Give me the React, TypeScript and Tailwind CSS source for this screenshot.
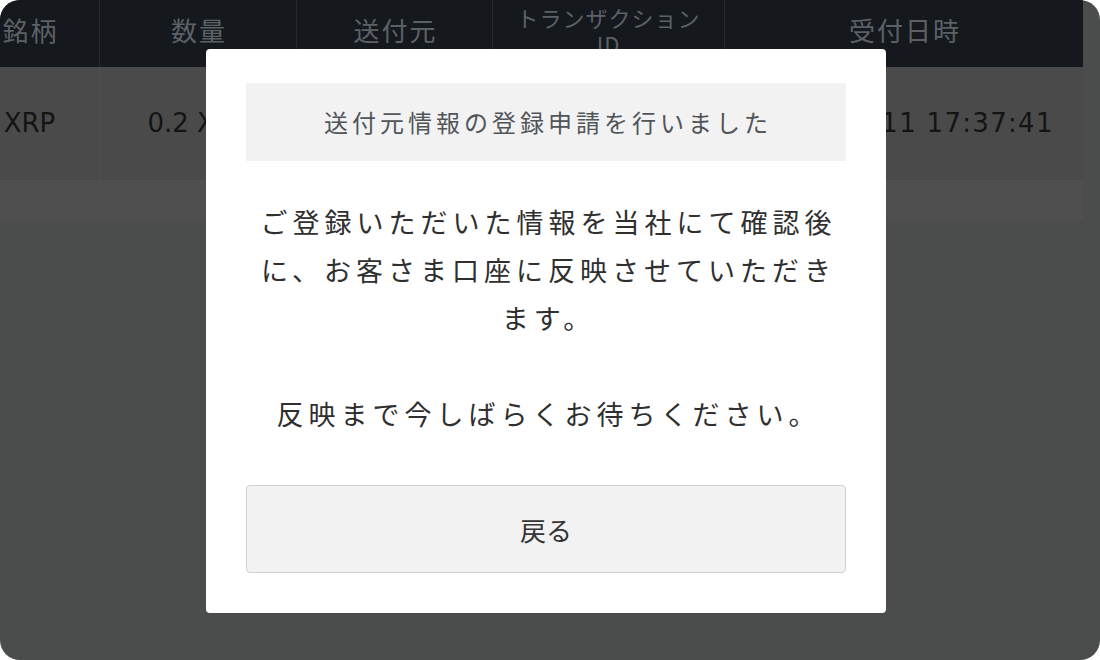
const jp = "font-['Noto_Sans_CJK_JP',sans-serif]";
const latin = "font-['DejaVu_Sans','Noto_Sans_CJK_JP',sans-serif]";

function HeaderCell({ className, children }: { className: string; children: React.ReactNode }) {
  return (
    <div
      className={`flex h-full items-center justify-center border-r border-[#25282d] pb-[8px] text-[#5c6168] ${className}`}
    >
      {children}
    </div>
  );
}

function RowCell({ className, children }: { className: string; children?: React.ReactNode }) {
  return (
    <div className={`flex h-full items-center justify-center border-r border-[#505050] ${className}`}>
      {children}
    </div>
  );
}

export default function App() {
  return (
    <div className="h-[660px] w-[1100px] bg-white">
      <div className="relative h-full w-full overflow-hidden rounded-[20px] bg-[#4b4d4c]">
        {/* table behind the dialog */}
        <div className="ml-[-40px] w-[1123px]">
          <div className={`flex h-[67px] bg-[#15181c] ${jp} text-[26px] tracking-[2px]`}>
            <HeaderCell className="w-[140px] pl-[2px]">銘柄</HeaderCell>
            <HeaderCell className="w-[197px] pl-[2px]">数量</HeaderCell>
            <HeaderCell className="w-[196px] pl-[2px]">送付元</HeaderCell>
            <HeaderCell className="w-[232px]">
              <div className="text-center text-[22px] leading-[26px] tracking-[1px]">
                トランザクション
                <br />
                ID
              </div>
            </HeaderCell>
            <HeaderCell className="flex-1 border-r-0 pl-[2px]">受付日時</HeaderCell>
          </div>
          <div className={`flex h-[113px] bg-[#4a4a4a] ${latin} text-[26px] text-[#141414]`}>
            <RowCell className="w-[140px]">XRP</RowCell>
            <RowCell className="w-[197px]">0.2 XRP</RowCell>
            <RowCell className="w-[196px]" />
            <RowCell className="w-[232px]" />
            <RowCell className="flex-1 border-r-0 tracking-[1.3px]">2024/03/11 17:37:41</RowCell>
          </div>
          <div className="h-[40px] border-t border-[#525252] bg-[#4f4f4f]" />
        </div>

        {/* dialog */}
        <div className="absolute left-[206px] top-[49px] flex h-[564px] w-[680px] flex-col rounded-[4px] bg-white px-[40px] pb-[40px] pt-[34px]">
          <div
            className={`flex h-[78px] items-center justify-center bg-[#f2f2f2] pl-[4px] ${jp} text-[24px] tracking-[4px] text-[#50555a]`}
          >
            送付元情報の登録申請を行いました
          </div>
          <p
            className={`mt-[37px] pl-[5px] text-center ${jp} text-[27px] leading-[48px] tracking-[5px] text-[#2f2f2f]`}
          >
            ご登録いただいた情報を当社にて確認後
            <br />
            に、お客さま口座に反映させていただき
            <br />
            ます。
            <br />
            <br />
            反映まで今しばらくお待ちください。
          </p>
          <button
            className={`mt-auto flex h-[88px] w-full items-center justify-center rounded-[4px] border border-[#d2d2d2] bg-[#f2f2f2] ${jp} text-[26px] text-[#333333]`}
          >
            戻る
          </button>
        </div>
      </div>
    </div>
  );
}
